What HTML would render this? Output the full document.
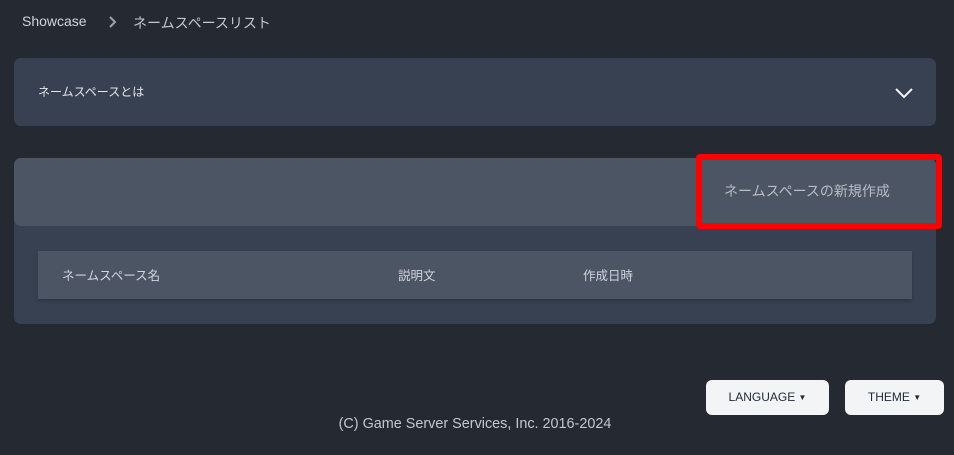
<!DOCTYPE html>
<html><head><meta charset="utf-8"><style>
*{margin:0;padding:0;box-sizing:border-box}
body{width:954px;height:455px;background:#252932;font-family:"Liberation Sans","Noto Sans CJK JP",sans-serif;position:relative;overflow:hidden;color:#e5e7eb}
.a{position:absolute}
.c{font-size:8px;vertical-align:1px}
</style></head><body>
<div class="a" style="left:22px;top:13px;font-size:14px;color:#d1d5db">Showcase</div>
<svg class="a" style="left:108px;top:16px" width="10" height="12" viewBox="0 0 10 12"><path d="M2 1l5 5-5 5" stroke="#9ca3af" stroke-width="2" fill="none"/></svg>
<div class="a" style="left:133px;top:13px;font-size:14px;color:#c3c7cf">ネームスペースリスト</div>

<div class="a" style="left:14px;top:58px;width:922px;height:68px;background:#374151;border-radius:7px"></div>
<div class="a" style="left:38px;top:83px;font-size:12px;color:#e5e7eb">ネームスペースとは</div>
<svg class="a" style="left:894px;top:87px" width="20" height="12" viewBox="0 0 20 12"><path d="M2 2l8 8 8-8" stroke="#f3f4f6" stroke-width="2" fill="none"/></svg>

<div class="a" style="left:14px;top:158px;width:922px;height:166px;background:#374151;border-radius:7px"></div>
<div class="a" style="left:14px;top:158px;width:922px;height:68px;background:#4b5563;border-radius:7px 7px 0 7px"></div>
<div class="a" style="left:696px;top:154px;width:246px;height:75px;border:6px solid #ff0000;border-radius:4px"></div>
<div class="a" style="left:724px;top:181px;font-size:14px;color:#b8bdc5">ネームスペースの新規作成</div>

<div class="a" style="left:38px;top:251px;width:874px;height:48px;background:#4b5563;box-shadow:0 2px 3px rgba(0,0,0,.2)"></div>
<div class="a" style="left:62px;top:265px;font-size:12.5px;color:#d1d5db">ネームスペース名</div>
<div class="a" style="left:398px;top:265px;font-size:12.5px;color:#d1d5db">説明文</div>
<div class="a" style="left:583px;top:265px;font-size:12.5px;color:#d1d5db">作成日時</div>

<div class="a" style="left:706px;top:380px;width:123px;height:35px;background:#f3f4f6;border-radius:6px;color:#1f2937;font-size:12px;text-align:center;line-height:35px">LANGUAGE <span class="c">▼</span></div>
<div class="a" style="left:845px;top:380px;width:99px;height:35px;background:#f3f4f6;border-radius:6px;color:#1f2937;font-size:12px;text-align:center;line-height:35px">THEME <span class="c">▼</span></div>
<div class="a" style="left:0;top:416px;width:950px;text-align:center;font-size:14.4px;color:#c3c7cf">(C) Game Server Services, Inc. 2016-2024</div>
</body></html>
